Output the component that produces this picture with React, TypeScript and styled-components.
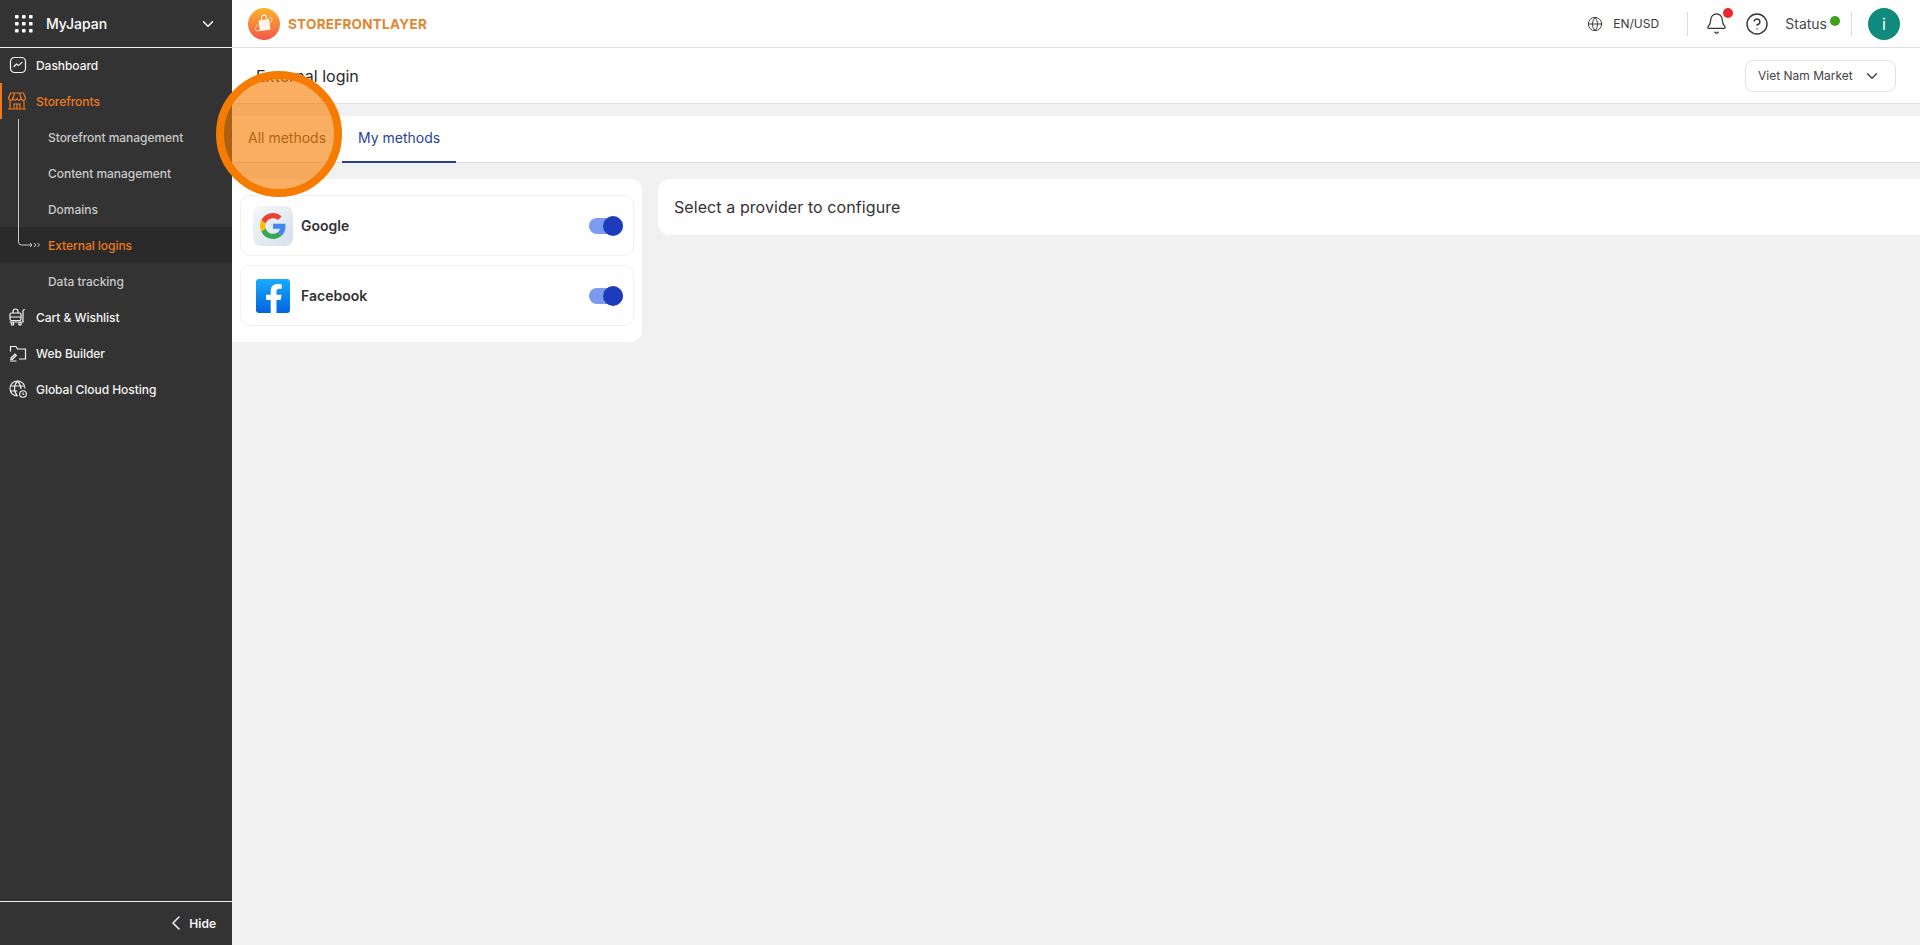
import { ChevronDown, ChevronLeft, CircleHelp, Bell, Globe } from 'lucide-react';
import styled, { createGlobalStyle } from 'styled-components';

const GlobalStyle = createGlobalStyle`
  html, body {
    margin: 0;
    padding: 0;
    height: 100%;
    background: #f1f1f1;
    font-family: Inter, "Liberation Sans", sans-serif;
  }
  * {
    box-sizing: border-box;
  }
`;

const Shell = styled.div`
  position: relative;
  display: flex;
  width: 1920px;
  height: 945px;
  overflow: hidden;
`;

const Sidebar = styled.aside`
  display: flex;
  flex-direction: column;
  flex-shrink: 0;
  width: 232px;
  height: 100%;
  background: #333333;
`;

const SideHead = styled.div`
  display: flex;
  align-items: center;
  height: 48px;
  padding: 0 15px 0 14px;
  border-bottom: 1px solid #f1f1f1;
  color: #ffffff;
`;

const OrgName = styled.span`
  flex: 1;
  margin-left: 12px;
  font-size: 14px;
  font-weight: 500;
`;

const Nav = styled.nav`
  position: relative;
  flex: 1;
  margin-top: -1px;
`;

const NavRow = styled.div<{ $active?: boolean; $marked?: boolean }>`
  display: flex;
  align-items: center;
  gap: 9px;
  height: 36px;
  padding-left: ${({ $marked }) => ($marked ? '7px' : '9px')};
  font-size: 12px;
  font-weight: 500;
  letter-spacing: -0.04px;
  color: ${({ $active }) => ($active ? '#f07a1c' : '#f4f4f4')};
  border-left: ${({ $marked }) => ($marked ? '2px solid #f07a1c' : 'none')};
  svg {
    flex-shrink: 0;
    margin-left: ${({ $marked }) => ($marked ? '-2px' : '0')};
  }
`;

const SubRow = styled.div<{ $current?: boolean }>`
  display: flex;
  align-items: center;
  height: 36px;
  padding-left: 48px;
  font-size: 12px;
  font-weight: 500;
  letter-spacing: -0.04px;
  color: ${({ $current }) => ($current ? '#f07a1c' : '#c9c9c9')};
  background: ${({ $current }) => ($current ? '#2a2a2a' : 'transparent')};
`;

const TreeLine = styled.svg`
  position: absolute;
  left: 17px;
  top: 72px;
  pointer-events: none;
`;

const SideFoot = styled.div`
  display: flex;
  align-items: center;
  justify-content: flex-end;
  gap: 1px;
  height: 44px;
  padding: 0 16px 1px 0;
  border-top: 1px solid #f1f1f1;
  font-size: 12px;
  font-weight: 600;
  color: #f4f4f4;
`;

const Main = styled.div`
  display: flex;
  flex-direction: column;
  flex: 1;
  min-width: 0;
`;

const TopBar = styled.header`
  display: flex;
  align-items: center;
  height: 48px;
  padding: 0 20px 0 16px;
  background: #ffffff;
  border-bottom: 1px solid #dedede;
`;

const Brand = styled.span`
  flex: 1;
  margin-left: 8px;
  font-size: 13.5px;
  font-weight: 700;
  letter-spacing: 0.27px;
  color: #e0872f;
`;

const Locale = styled.span`
  width: 46px;
  margin-left: 10px;
  margin-right: 28px;
  font-size: 12px;
  white-space: nowrap;
  color: #3a3a3a;
`;

const Divider = styled.span`
  width: 1px;
  height: 24px;
  background: #dddddd;
`;

const BellWrap = styled.span`
  position: relative;
  display: flex;
  margin-left: 17px;
  color: #333333;
`;

const HelpWrap = styled.span`
  display: flex;
  margin-left: 17px;
  color: #333333;
`;

const Dot = styled.span<{ $color: string; $top: number; $right: number }>`
  position: absolute;
  top: ${({ $top }) => $top}px;
  right: ${({ $right }) => $right}px;
  width: 10px;
  height: 10px;
  border-radius: 50%;
  background: ${({ $color }) => $color};
`;

const StatusLabel = styled.span`
  position: relative;
  margin-left: 16px;
  margin-right: 24px;
  font-size: 14px;
  color: #4a4a4a;
`;

const Avatar = styled.span`
  display: flex;
  align-items: center;
  justify-content: center;
  width: 32px;
  height: 32px;
  margin-left: 16px;
  border-radius: 50%;
  background: #0f8a7c;
  color: #ffffff;
  font-size: 16px;
`;

const TitleBar = styled.div`
  display: flex;
  align-items: center;
  justify-content: space-between;
  height: 56px;
  padding: 0 24px;
  background: #ffffff;
  border-bottom: 1px solid #dedede;
`;

const PageTitle = styled.h1`
  margin: 0;
  font-size: 16px;
  font-weight: 400;
  color: #2b2b2b;
`;

const MarketSelect = styled.div`
  display: flex;
  align-items: center;
  justify-content: space-between;
  width: 151px;
  height: 32px;
  padding: 0 14px 0 12px;
  border: 1px solid #e2e2e2;
  border-radius: 8px;
  font-size: 12px;
  color: #444444;
`;

const Tabs = styled.div`
  display: flex;
  height: 47px;
  margin-top: 12px;
  background: #ffffff;
  border-bottom: 1px solid #dedede;
`;

const Tab = styled.div<{ $selected?: boolean }>`
  display: flex;
  align-items: center;
  padding: 0 16px 2px;
  margin-bottom: -1px;
  font-size: 14px;
  color: ${({ $selected }) => ($selected ? '#2a3f9d' : '#3a3a3a')};
  border-bottom: 2px solid ${({ $selected }) => ($selected ? '#2a3f9d' : 'transparent')};
`;

const Content = styled.div`
  display: flex;
  align-items: flex-start;
  gap: 16px;
  padding-top: 16px;
`;

const ProviderCard = styled.div`
  display: flex;
  flex-direction: column;
  gap: 9px;
  flex-shrink: 0;
  width: 410px;
  padding: 16px 8px;
  background: #ffffff;
  border-radius: 0 12px 12px 0;
`;

const Provider = styled.div`
  display: flex;
  align-items: center;
  gap: 8px;
  height: 61px;
  padding: 0 10px 0 12px;
  border: 1px solid #efefef;
  border-radius: 10px;
`;

const ProviderLogo = styled.span`
  display: flex;
  align-items: center;
  justify-content: center;
  width: 40px;
  height: 40px;
  border-radius: 8px;
`;

const GoogleLogo = styled(ProviderLogo)`
  background: linear-gradient(135deg, #f4f7fa, #d5e0ea);
`;

const ProviderName = styled.span`
  flex: 1;
  font-size: 14px;
  font-weight: 600;
  color: #333333;
`;

const Toggle = styled.span`
  position: relative;
  width: 34px;
  height: 16px;
  border-radius: 8px;
  background: #7d9bee;
  &::after {
    content: '';
    position: absolute;
    right: 0;
    top: -2px;
    width: 20px;
    height: 20px;
    border-radius: 50%;
    background: #1e3bbd;
  }
`;

const DetailCard = styled.div`
  flex: 1;
  display: flex;
  align-items: center;
  height: 56px;
  padding: 0 16px;
  background: #ffffff;
  border-radius: 12px 0 0 12px;
  font-size: 16px;
  font-weight: 400;
  letter-spacing: 0.08px;
  color: #333333;
`;

const Highlight = styled.div`
  position: absolute;
  left: 216px;
  top: 71px;
  width: 126px;
  height: 126px;
  border: 8px solid #f57c00;
  border-radius: 50%;
  background: rgba(245, 124, 0, 0.62);
  pointer-events: none;
`;

const GridIcon = () => (
  <svg width="20" height="20" viewBox="0 0 20 20" fill="#ffffff">
    {[1, 8, 15].map((y) =>
      [1, 8, 15].map((x) => <rect key={`${x}-${y}`} x={x} y={y} width="3.6" height="3.6" rx="0.8" />),
    )}
  </svg>
);

const DashboardIcon = () => (
  <svg width="18" height="18" viewBox="0 0 18 18" fill="none" stroke="#f4f4f4" strokeWidth="1.2">
    <rect x="1.500" y="1.500" width="15" height="15" rx="4" />
    <path d="M5 10.500 7.400 8l2 1.600L13 6.400" strokeLinecap="round" strokeLinejoin="round" />
  </svg>
);

const StoreIcon = () => (
  <svg width="20" height="18" viewBox="0 0 20 18" fill="none" stroke="#f07a1c" strokeWidth="1.2">
    <path d="M3.500 1h13l2 5.200a2.200 2.200 0 0 1-4.300.6 2.300 2.300 0 0 1-4.200 0 2.300 2.300 0 0 1-4.200 0 2.200 2.200 0 0 1-4.300-.6z" />
    <path d="M3 9v8h14V9M1 17h18M7 17v-5h6v5M10 12v5M7.500 1 6 6.500M12.500 1 14 6.500" />
  </svg>
);

const CartIcon = () => (
  <svg width="18" height="18" viewBox="0 0 18 18" fill="none" stroke="#f4f4f4" strokeWidth="1.2">
    <rect x="1" y="5" width="11" height="7.500" rx="1.500" />
    <path d="M4 5V3.500a2.500 2.500 0 0 1 5 0V5M1 9h11M.5 14h13.500V3c0-1 .7-1.500 2-1.500" />
    <circle cx="3.500" cy="15.800" r="1.300" />
    <circle cx="11" cy="15.800" r="1.300" />
  </svg>
);

const BuilderIcon = () => (
  <svg width="18" height="18" viewBox="0 0 18 18" fill="none" stroke="#f4f4f4" strokeWidth="1.2">
    <path d="M1.500 7.500V2.500h5.500l1.500 2.500h8V15H10" />
    <path d="M2 14l4-3.800 1.300 1.300-4 3.800H2zM1 17h6.500" />
  </svg>
);

const HostingIcon = () => (
  <svg width="18" height="18" viewBox="0 0 18 18" fill="none" stroke="#f4f4f4" strokeWidth="1.100">
    <path d="M8.500 16A7.500 7.500 0 1 1 16 8.500" />
    <path d="M8.500 1c-4 4.200-4 10.800 0 15M8.500 1c2.600 2.700 3.500 5.500 3.500 8M1.300 6h14M1.300 11h7" />
    <circle cx="14" cy="14" r="3.300" fill="#333333" />
    <path d="M14 12.400V14l1 .8" />
  </svg>
);

const LogoMark = () => (
  <svg width="32" height="32" viewBox="0 0 32 32">
    <defs>
      <linearGradient id="logoFill" x1="0" y1="0" x2="0" y2="1">
        <stop offset="0" stopColor="#f9b52a" />
        <stop offset="1" stopColor="#f2574b" />
      </linearGradient>
    </defs>
    <circle cx="16" cy="16" r="16" fill="url(#logoFill)" />
    <path d="M10.500 12.500l10.500-1.500 1.500 10.500-10.500 1.500z" fill="#fff6ea" />
    <path d="M13.500 12V9.500a2.500 2.500 0 0 1 5 0V11" fill="none" stroke="#fff6ea" strokeWidth="1.200" />
    <path d="M11 15.500c-3 3-4.500 6-3 7 1.800 1.200 7-1 11-4.500 4-3.500 6-7 4.800-8.200-.5-.5-1.500-.4-2.800.2" fill="none" stroke="#fff6ea" strokeWidth="0.800" />
  </svg>
);

const GoogleMark = () => (
  <svg width="26" height="26" viewBox="0 0 48 48">
    <path fill="#EA4335" d="M24 9.500c3.540 0 6.710 1.220 9.210 3.600l6.850-6.850C35.900 2.380 30.470 0 24 0 14.620 0 6.510 5.380 2.560 13.220l7.980 6.190C12.430 13.720 17.740 9.500 24 9.500z" />
    <path fill="#4285F4" d="M46.980 24.550c0-1.570-.15-3.090-.38-4.550H24v9.020h12.940c-.58 2.960-2.260 5.480-4.780 7.180l7.730 6c4.510-4.180 7.090-10.360 7.090-17.650z" />
    <path fill="#FBBC05" d="M10.530 28.590c-.48-1.450-.76-2.990-.76-4.590s.27-3.140.76-4.590l-7.980-6.190C.92 16.460 0 20.120 0 24c0 3.880.92 7.540 2.560 10.780l7.970-6.190z" />
    <path fill="#34A853" d="M24 48c6.480 0 11.930-2.130 15.890-5.810l-7.730-6c-2.150 1.450-4.920 2.300-8.160 2.300-6.260 0-11.570-4.220-13.470-9.910l-7.980 6.190C6.510 42.620 14.620 48 24 48z" />
  </svg>
);

const FacebookMark = () => (
  <svg width="34" height="34" viewBox="0 0 34 34">
    <defs>
      <linearGradient id="fbFill" x1="0" y1="0" x2="0" y2="1">
        <stop offset="0" stopColor="#18acfe" />
        <stop offset="1" stopColor="#0163e0" />
      </linearGradient>
    </defs>
    <rect width="34" height="34" rx="3" fill="url(#fbFill)" />
    <path
      fill="#ffffff"
      d="M23.500 34V21h4.200l.8-5.200h-5v-3.200c0-1.500.7-2.800 3-2.800h2.200V5.400S26.600 5 24.600 5c-4.200 0-6.900 2.500-6.900 7.100v3.700h-4.600V21h4.600v13z"
      transform="translate(-3 0)"
    />
  </svg>
);

export default function App() {
  return (
    <>
      <GlobalStyle />
      <Shell>
        <Sidebar>
          <SideHead>
            <GridIcon />
            <OrgName>MyJapan</OrgName>
            <ChevronDown size={18} />
          </SideHead>
          <Nav>
            <NavRow>
              <DashboardIcon />
              Dashboard
            </NavRow>
            <NavRow $active $marked>
              <StoreIcon />
              Storefronts
            </NavRow>
            <SubRow>Storefront management</SubRow>
            <SubRow>Content management</SubRow>
            <SubRow>Domains</SubRow>
            <SubRow $current>External logins</SubRow>
            <SubRow>Data tracking</SubRow>
            <NavRow>
              <CartIcon />
              Cart &amp; Wishlist
            </NavRow>
            <NavRow>
              <BuilderIcon />
              Web Builder
            </NavRow>
            <NavRow>
              <HostingIcon />
              Global Cloud Hosting
            </NavRow>
            <TreeLine width="26" height="132" viewBox="0 0 26 132" fill="none" stroke="#c9c9c9">
              <path d="M1.500 0v123a3 3 0 0 0 3 3H15" />
              <path d="M13 124l2 2-2 2M17 124l2 2-2 2M20.500 124l2 2-2 2" />
            </TreeLine>
          </Nav>
          <SideFoot>
            <ChevronLeft size={24} strokeWidth={1.5} />
            Hide
          </SideFoot>
        </Sidebar>

        <Main>
          <TopBar>
            <LogoMark />
            <Brand>STOREFRONTLAYER</Brand>
            <Globe size={16} color="#333333" strokeWidth={1.4} />
            <Locale>EN/USD</Locale>
            <Divider />
            <BellWrap>
              <Bell size={23} strokeWidth={1.3} />
              <Dot $color="#f0252f" $top={-4} $right={-5} />
            </BellWrap>
            <HelpWrap>
              <CircleHelp size={24} strokeWidth={1.4} />
            </HelpWrap>
            <StatusLabel>
              Status
              <Dot $color="#3fa11a" $top={1} $right={-13} />
            </StatusLabel>
            <Divider />
            <Avatar>i</Avatar>
          </TopBar>
          <TitleBar>
            <PageTitle>External login</PageTitle>
            <MarketSelect>
              Viet Nam Market
              <ChevronDown size={18} />
            </MarketSelect>
          </TitleBar>
          <Tabs>
            <Tab>All methods</Tab>
            <Tab $selected>My methods</Tab>
          </Tabs>
          <Content>
            <ProviderCard>
              <Provider>
                <GoogleLogo>
                  <GoogleMark />
                </GoogleLogo>
                <ProviderName>Google</ProviderName>
                <Toggle />
              </Provider>
              <Provider>
                <ProviderLogo>
                  <FacebookMark />
                </ProviderLogo>
                <ProviderName>Facebook</ProviderName>
                <Toggle />
              </Provider>
            </ProviderCard>
            <DetailCard>Select a provider to configure</DetailCard>
          </Content>
        </Main>
        <Highlight />
      </Shell>
    </>
  );
}
